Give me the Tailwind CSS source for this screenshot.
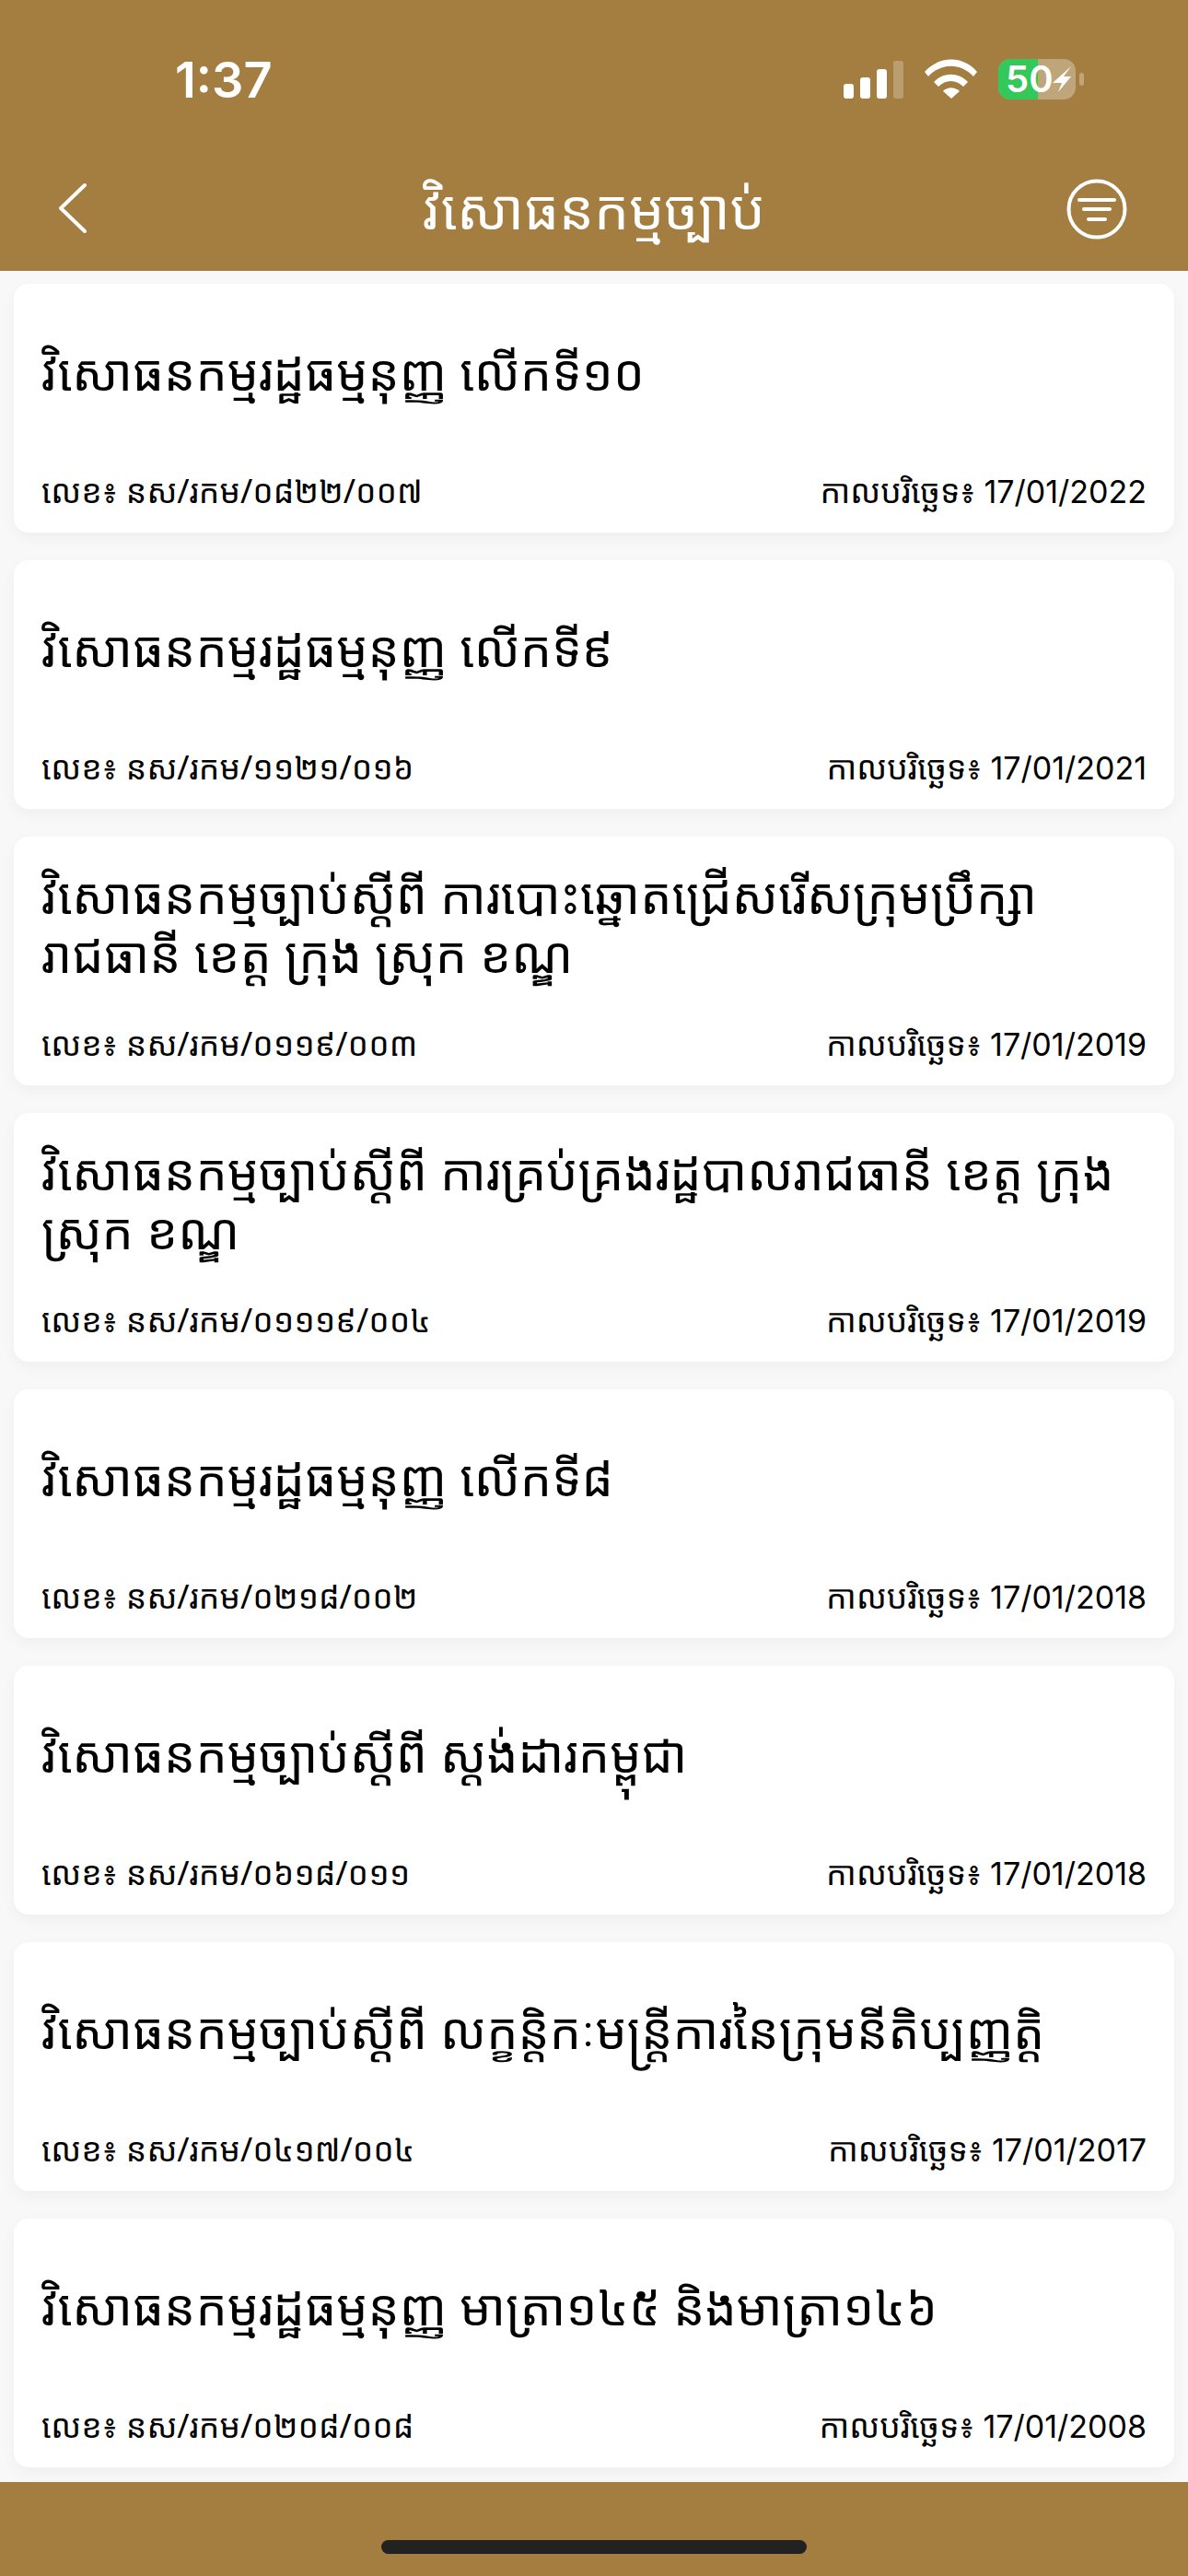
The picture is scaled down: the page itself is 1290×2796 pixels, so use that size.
<!DOCTYPE html>
<html><head><meta charset="utf-8"><script src="https://cdn.jsdelivr.net/npm/@tailwindcss/browser@4"></script></head>
<body class="bg-[#f8f8f8]">
<div class="w-[1290px] h-[2796px] flex flex-col overflow-hidden font-['Noto_Sans_Khmer','Khmer_OS','Noto_Sans','Roboto',sans-serif] text-black">
<header class="relative h-[294px] shrink-0 bg-[#a47e41] text-white">
<div class="absolute left-[190px] top-[60px] text-[54px] leading-[54px] font-semibold font-['Inter',sans-serif]">1:37</div>
<svg class="absolute left-[910px] top-[60px]" width="280" height="72" viewBox="0 0 280 72">
<g fill="#fff"><rect x="6" y="31" width="11" height="16" rx="3"/><rect x="24" y="24" width="11" height="23" rx="3"/><rect x="42" y="15" width="11" height="32" rx="3"/><rect x="60" y="6" width="11" height="41" rx="3" fill-opacity=".25"/>
<path d="M94 18 C110 0 136 0 151 18 L147 23 C133 8 112 8 98 23Z"/><path d="M104 29 C114 18 131 18 141 29 L136 34 C128 26 117 26 109 34Z"/><path d="M114 39 C119 34 126 34 132 39 L123 47Z"/></g>
<rect x="174" y="4" width="84" height="44" rx="13" fill="#fff" fill-opacity=".3"/><path d="M187 4 H217 V48 H187 A13 13 0 0 1 174 35 V17 A13 13 0 0 1 187 4Z" fill="#34c759"/><rect x="262" y="19" width="5" height="14" rx="2.5" fill="#fff" fill-opacity=".3"/>
<path d="M253 12 L233 30 H243 L239 40 L253 23 H245Z" fill="#fff"/>
</svg>
<div class="absolute left-[1092px] top-[66px] text-[40px] leading-[40px] font-semibold font-['Inter',sans-serif] text-white">50</div>
<svg class="absolute left-[60px] top-[198px]" width="40" height="56" viewBox="0 0 40 56" fill="none" stroke="#fff" stroke-width="4" stroke-linecap="round" stroke-linejoin="round"><path d="M32 3 L6 28 L32 53"/></svg>
<div class="absolute left-0 right-0 top-[186px] text-center text-[60px] leading-[80px]">វិសោធនកម្មច្បាប់</div>
<svg class="absolute left-[1158px] top-[194px]" width="66" height="66" viewBox="0 0 66 66" fill="none" stroke="#fff" stroke-linecap="round"><circle cx="33" cy="33" r="30.5" stroke-width="4"/><path d="M14 23 H52 M19 33 H47 M24 44 H42" stroke-width="4"/></svg>
</header>
<main class="flex-1 px-[15px] pt-[14px] flex flex-col gap-[30px] overflow-hidden">
<article class="h-[270px] shrink-0 rounded-[16px] bg-white shadow-[0_6px_16px_rgba(0,0,0,0.04)] px-[30px] flex flex-col"><h2 class="h-[190px] flex items-center text-[54px] leading-[64px] font-normal">វិសោធនកម្មរដ្ឋធម្មនុញ្ញ លើកទី១០</h2><div class="flex justify-between items-baseline mt-[12px] text-[35.5px] leading-[44px]"><span>លេខ៖ នស/រកម/០៨២២/០០៧</span><span>កាលបរិច្ឆេទ៖ <span class="font-['Inter'] text-[34px]">17/01/2022</span></span></div></article>
<article class="h-[270px] shrink-0 rounded-[16px] bg-white shadow-[0_6px_16px_rgba(0,0,0,0.04)] px-[30px] flex flex-col"><h2 class="h-[190px] flex items-center text-[54px] leading-[64px] font-normal">វិសោធនកម្មរដ្ឋធម្មនុញ្ញ លើកទី៩</h2><div class="flex justify-between items-baseline mt-[12px] text-[35.5px] leading-[44px]"><span>លេខ៖ នស/រកម/១១២១/០១៦</span><span>កាលបរិច្ឆេទ៖ <span class="font-['Inter'] text-[34px]">17/01/2021</span></span></div></article>
<article class="h-[270px] shrink-0 rounded-[16px] bg-white shadow-[0_6px_16px_rgba(0,0,0,0.04)] px-[30px] flex flex-col"><h2 class="h-[190px] flex items-center text-[54px] leading-[64px] font-normal">វិសោធនកម្មច្បាប់ស្តីពី ការបោះឆ្នោតជ្រើសរើសក្រុមប្រឹក្សា រាជធានី ខេត្ត ក្រុង ស្រុក ខណ្ឌ</h2><div class="flex justify-between items-baseline mt-[12px] text-[35.5px] leading-[44px]"><span>លេខ៖ នស/រកម/០១១៩/០០៣</span><span>កាលបរិច្ឆេទ៖ <span class="font-['Inter'] text-[34px]">17/01/2019</span></span></div></article>
<article class="h-[270px] shrink-0 rounded-[16px] bg-white shadow-[0_6px_16px_rgba(0,0,0,0.04)] px-[30px] flex flex-col"><h2 class="h-[190px] flex items-center text-[54px] leading-[64px] font-normal">វិសោធនកម្មច្បាប់ស្តីពី ការគ្រប់គ្រងរដ្ឋបាលរាជធានី ខេត្ត ក្រុង ស្រុក ខណ្ឌ</h2><div class="flex justify-between items-baseline mt-[12px] text-[35.5px] leading-[44px]"><span>លេខ៖ នស/រកម/០១១១៩/០០៤</span><span>កាលបរិច្ឆេទ៖ <span class="font-['Inter'] text-[34px]">17/01/2019</span></span></div></article>
<article class="h-[270px] shrink-0 rounded-[16px] bg-white shadow-[0_6px_16px_rgba(0,0,0,0.04)] px-[30px] flex flex-col"><h2 class="h-[190px] flex items-center text-[54px] leading-[64px] font-normal">វិសោធនកម្មរដ្ឋធម្មនុញ្ញ លើកទី៨</h2><div class="flex justify-between items-baseline mt-[12px] text-[35.5px] leading-[44px]"><span>លេខ៖ នស/រកម/០២១៨/០០២</span><span>កាលបរិច្ឆេទ៖ <span class="font-['Inter'] text-[34px]">17/01/2018</span></span></div></article>
<article class="h-[270px] shrink-0 rounded-[16px] bg-white shadow-[0_6px_16px_rgba(0,0,0,0.04)] px-[30px] flex flex-col"><h2 class="h-[190px] flex items-center text-[54px] leading-[64px] font-normal">វិសោធនកម្មច្បាប់ស្តីពី ស្តង់ដារកម្ពុជា</h2><div class="flex justify-between items-baseline mt-[12px] text-[35.5px] leading-[44px]"><span>លេខ៖ នស/រកម/០៦១៨/០១១</span><span>កាលបរិច្ឆេទ៖ <span class="font-['Inter'] text-[34px]">17/01/2018</span></span></div></article>
<article class="h-[270px] shrink-0 rounded-[16px] bg-white shadow-[0_6px_16px_rgba(0,0,0,0.04)] px-[30px] flex flex-col"><h2 class="h-[190px] flex items-center text-[54px] leading-[64px] font-normal">វិសោធនកម្មច្បាប់ស្តីពី លក្ខន្តិកៈមន្រ្តីការនៃក្រុមនីតិប្បញ្ញត្តិ</h2><div class="flex justify-between items-baseline mt-[12px] text-[35.5px] leading-[44px]"><span>លេខ៖ នស/រកម/០៤១៧/០០៤</span><span>កាលបរិច្ឆេទ៖ <span class="font-['Inter'] text-[34px]">17/01/2017</span></span></div></article>
<article class="h-[270px] shrink-0 rounded-[16px] bg-white shadow-[0_6px_16px_rgba(0,0,0,0.04)] px-[30px] flex flex-col"><h2 class="h-[190px] flex items-center text-[54px] leading-[64px] font-normal">វិសោធនកម្មរដ្ឋធម្មនុញ្ញ មាត្រា១៤៥ និងមាត្រា១៤៦</h2><div class="flex justify-between items-baseline mt-[12px] text-[35.5px] leading-[44px]"><span>លេខ៖ នស/រកម/០២០៨/០០៨</span><span>កាលបរិច្ឆេទ៖ <span class="font-['Inter'] text-[34px]">17/01/2008</span></span></div></article>
</main>
<footer class="relative h-[102px] shrink-0 bg-[#a47e41] flex justify-center"><div class="mt-[63px] w-[462px] h-[15px] rounded-full bg-[#222]"></div></footer>
</div>
</body></html>
